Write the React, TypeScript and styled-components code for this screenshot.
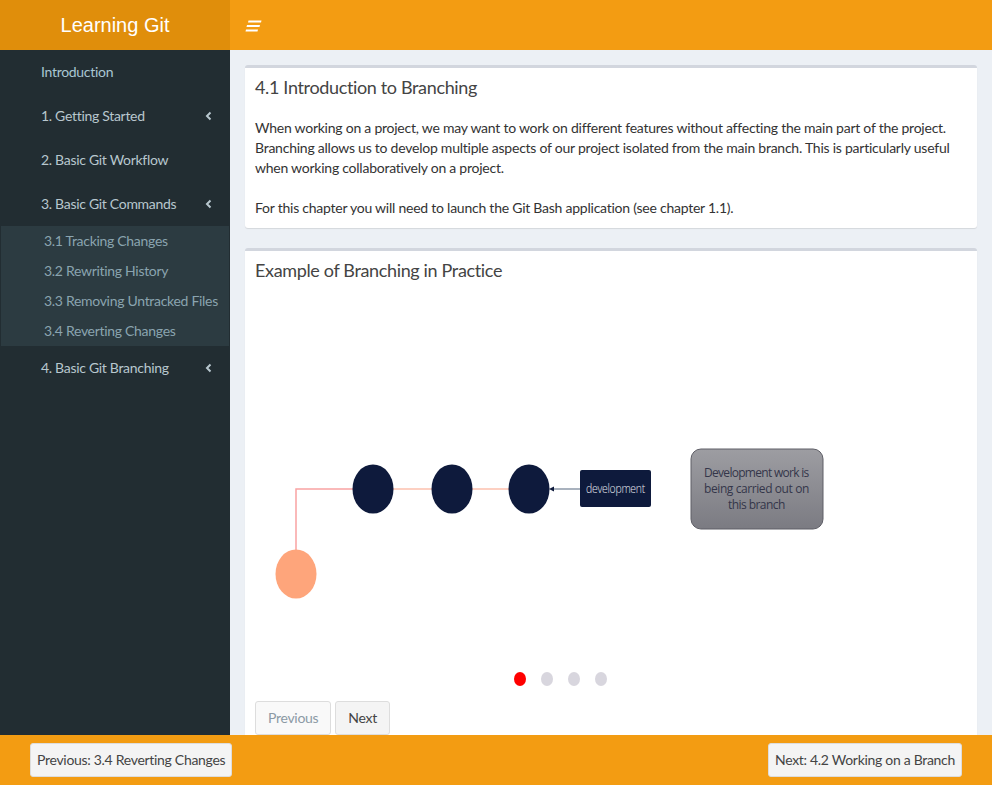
import React from 'react'
import styled, { createGlobalStyle } from 'styled-components'

const GlobalStyle = createGlobalStyle`
  html, body {
    margin: 0;
    padding: 0;
    height: 100%;
    overflow: hidden;
  }
  body {
    font-family: Lato, "Noto Sans", sans-serif;
    font-size: 14px;
    letter-spacing: -0.3px;
    color: #333;
    background: #ecf0f5;
  }
`

const Shell = styled.div`
  display: grid;
  grid-template-columns: 230px 1fr;
  grid-template-rows: 50px 1fr 50px;
  height: 100vh;
`

const Logo = styled.div`
  background: #e08e0b;
  color: #fff;
  font-family: "Liberation Sans", Arial, sans-serif;
  font-size: 20px;
  letter-spacing: 0;
  display: flex;
  align-items: center;
  justify-content: center;
`

const Navbar = styled.div`
  background: #f39c12;
  display: flex;
  align-items: center;
  padding-left: 15px;
`

const Sidebar = styled.nav`
  background: #222d32;
  overflow: hidden;
  white-space: nowrap;
`

const MenuItem = styled.div<{ $active?: boolean }>`
  display: flex;
  align-items: center;
  justify-content: space-between;
  padding: 12px 18px 12px 41px;
  line-height: 20px;
  color: ${(p) => (p.$active ? '#a9c6d3' : '#b8c7ce')};
`

const SubMenu = styled.div`
  background: #2c3b41;
  margin: 0 1px;
`

const SubItem = styled.div`
  padding: 5px 0 5px 43px;
  line-height: 20px;
  color: #8aa4af;
`

const Content = styled.main`
  padding: 15px;
  overflow: hidden;
`

const Box = styled.section`
  background: #fff;
  border-top: 3px solid #d2d6de;
  border-radius: 3px;
  box-shadow: 0 1px 1px rgba(0, 0, 0, 0.1);
  margin-bottom: 20px;
`

const BoxTitle = styled.h3`
  margin: 0;
  padding: 10px;
  font-size: 18px;
  line-height: 18px;
  font-weight: 400;
  letter-spacing: -0.35px;
  color: #444;
`

const BoxBody = styled.div<{ $top?: number }>`
  padding: ${(p) => p.$top ?? 10}px 10px 10px;
`

const Para = styled.p`
  margin: 0 0 20px;
  line-height: 20px;
  letter-spacing: -0.24px;
  &:last-child {
    margin-bottom: 0;
  }
`

const Carousel = styled.div`
  width: 610px;
`

const Dots = styled.div`
  display: flex;
  justify-content: center;
  gap: 15px;
  margin: 7px 0 15px;
`

const Dot = styled.span<{ $on?: boolean }>`
  width: 12px;
  height: 14px;
  border-radius: 50%;
  background: ${(p) => (p.$on ? '#ff0000' : '#d8d6de')};
`

const BtnRow = styled.div`
  display: flex;
  gap: 4px;
`

const Button = styled.button<{ $disabled?: boolean; $compact?: boolean }>`
  font-family: inherit;
  font-size: 14px;
  letter-spacing: -0.3px;
  line-height: 20px;
  padding: ${(p) => (p.$compact ? '6px 6px' : '6px 12px 6px 12px')};
  border: 1px solid #ddd;
  border-radius: 3px;
  background: ${(p) => (p.$disabled ? '#f9f9f9' : '#f4f4f4')};
  color: ${(p) => (p.$disabled ? '#8c9aa5' : '#444')};
  cursor: pointer;
`

const Footer = styled.footer`
  grid-column: 1 / -1;
  background: #f39c12;
  display: flex;
  justify-content: space-between;
  align-items: flex-start;
  padding: 8px 30px 0;
`

const Bars = () => (
  <svg width="18" height="14" viewBox="0 0 18 14">
    <polygon points="3.5,2.5 16.5,2.5 16,4.5 3,4.5" fill="#fff" />
    <polygon points="2,7 15,7 14.5,9 1.5,9" fill="#fff" />
    <polygon points="1,11.5 13,11.5 12.5,13.5 0.5,13.5" fill="#fff" />
  </svg>
)

const Angle = () => (
  <svg width="7" height="10" viewBox="0 0 7 10">
    <path d="M5.5 1.5 L2 5 L5.5 8.5" fill="none" stroke="#b8c7ce" strokeWidth="2" />
  </svg>
)

const Diagram = () => (
  <svg width="610" height="363" viewBox="0 0 610 363">
    <defs>
      <linearGradient id="note" x1="0" y1="0" x2="0" y2="1">
        <stop offset="0" stopColor="#9d9da2" />
        <stop offset="1" stopColor="#7b7b82" />
      </linearGradient>
    </defs>
    <path d="M41 252 V190 H110" fill="none" stroke="#f9a3a3" strokeWidth="1.5" />
    <line x1="118" y1="190" x2="274" y2="190" stroke="#fcc0ae" strokeWidth="1.5" />
    <line x1="325" y1="190" x2="298" y2="190" stroke="#8d98a8" strokeWidth="1.5" />
    <polygon points="294,190 299,187.5 299,192.5" fill="#0e1a3c" />
    <ellipse cx="41" cy="275" rx="20.5" ry="24.5" fill="#fea57b" />
    <ellipse cx="118" cy="190" rx="20.5" ry="24.5" fill="#0e1a3c" />
    <ellipse cx="197" cy="190" rx="20.5" ry="24.5" fill="#0e1a3c" />
    <ellipse cx="274" cy="190" rx="20.5" ry="24.5" fill="#0e1a3c" />
    <rect x="325" y="171" width="71" height="37" rx="2" fill="#0e1a3c" />
    <text x="331" y="194" textLength="59" lengthAdjust="spacingAndGlyphs" fill="#e8eaf0" fontSize="12" fontFamily="'Open Sans', sans-serif" fontWeight="300">development</text>
    <rect x="436" y="150" width="132" height="80" rx="10" fill="url(#note)" stroke="#5e5e66" strokeWidth="1" />
    <text fill="#34364a" fontSize="12" fontFamily="'Open Sans', sans-serif" lengthAdjust="spacingAndGlyphs">
      <tspan x="449" y="178" textLength="105">Development work is</tspan>
      <tspan x="449" y="194" textLength="105">being carried out on</tspan>
      <tspan x="473" y="210" textLength="57">this branch</tspan>
    </text>
  </svg>
)

const App = () => {
  return (
    <Shell>
      <GlobalStyle />
      <Logo>Learning Git</Logo>
      <Navbar>
        <Bars />
      </Navbar>
      <Sidebar>
        <MenuItem $active>Introduction</MenuItem>
        <MenuItem>1. Getting Started<Angle /></MenuItem>
        <MenuItem>2. Basic Git Workflow</MenuItem>
        <MenuItem>3. Basic Git Commands<Angle /></MenuItem>
        <SubMenu>
          <SubItem>3.1 Tracking Changes</SubItem>
          <SubItem>3.2 Rewriting History</SubItem>
          <SubItem>3.3 Removing Untracked Files</SubItem>
          <SubItem>3.4 Reverting Changes</SubItem>
        </SubMenu>
        <MenuItem>4. Basic Git Branching<Angle /></MenuItem>
      </Sidebar>
      <Content>
        <Box>
          <BoxTitle>4.1 Introduction to Branching</BoxTitle>
          <BoxBody $top={12}>
            <Para>
              When working on a project, we may want to work on different features without affecting the main part of the project.
              Branching allows us to develop multiple aspects of our project isolated from the main branch. This is particularly useful
              when working collaboratively on a project.
            </Para>
            <Para>For this chapter you will need to launch the Git Bash application (see chapter 1.1).</Para>
          </BoxBody>
        </Box>
        <Box>
          <BoxTitle>Example of Branching in Practice</BoxTitle>
          <BoxBody>
            <Carousel>
              <Diagram />
              <Dots>
                <Dot $on />
                <Dot />
                <Dot />
                <Dot />
              </Dots>
            </Carousel>
            <BtnRow>
              <Button $disabled>Previous</Button>
              <Button>Next</Button>
            </BtnRow>
          </BoxBody>
        </Box>
      </Content>
      <Footer>
        <Button $compact>Previous: 3.4 Reverting Changes</Button>
        <Button $compact>Next: 4.2 Working on a Branch</Button>
      </Footer>
    </Shell>
  )
}

export default App
